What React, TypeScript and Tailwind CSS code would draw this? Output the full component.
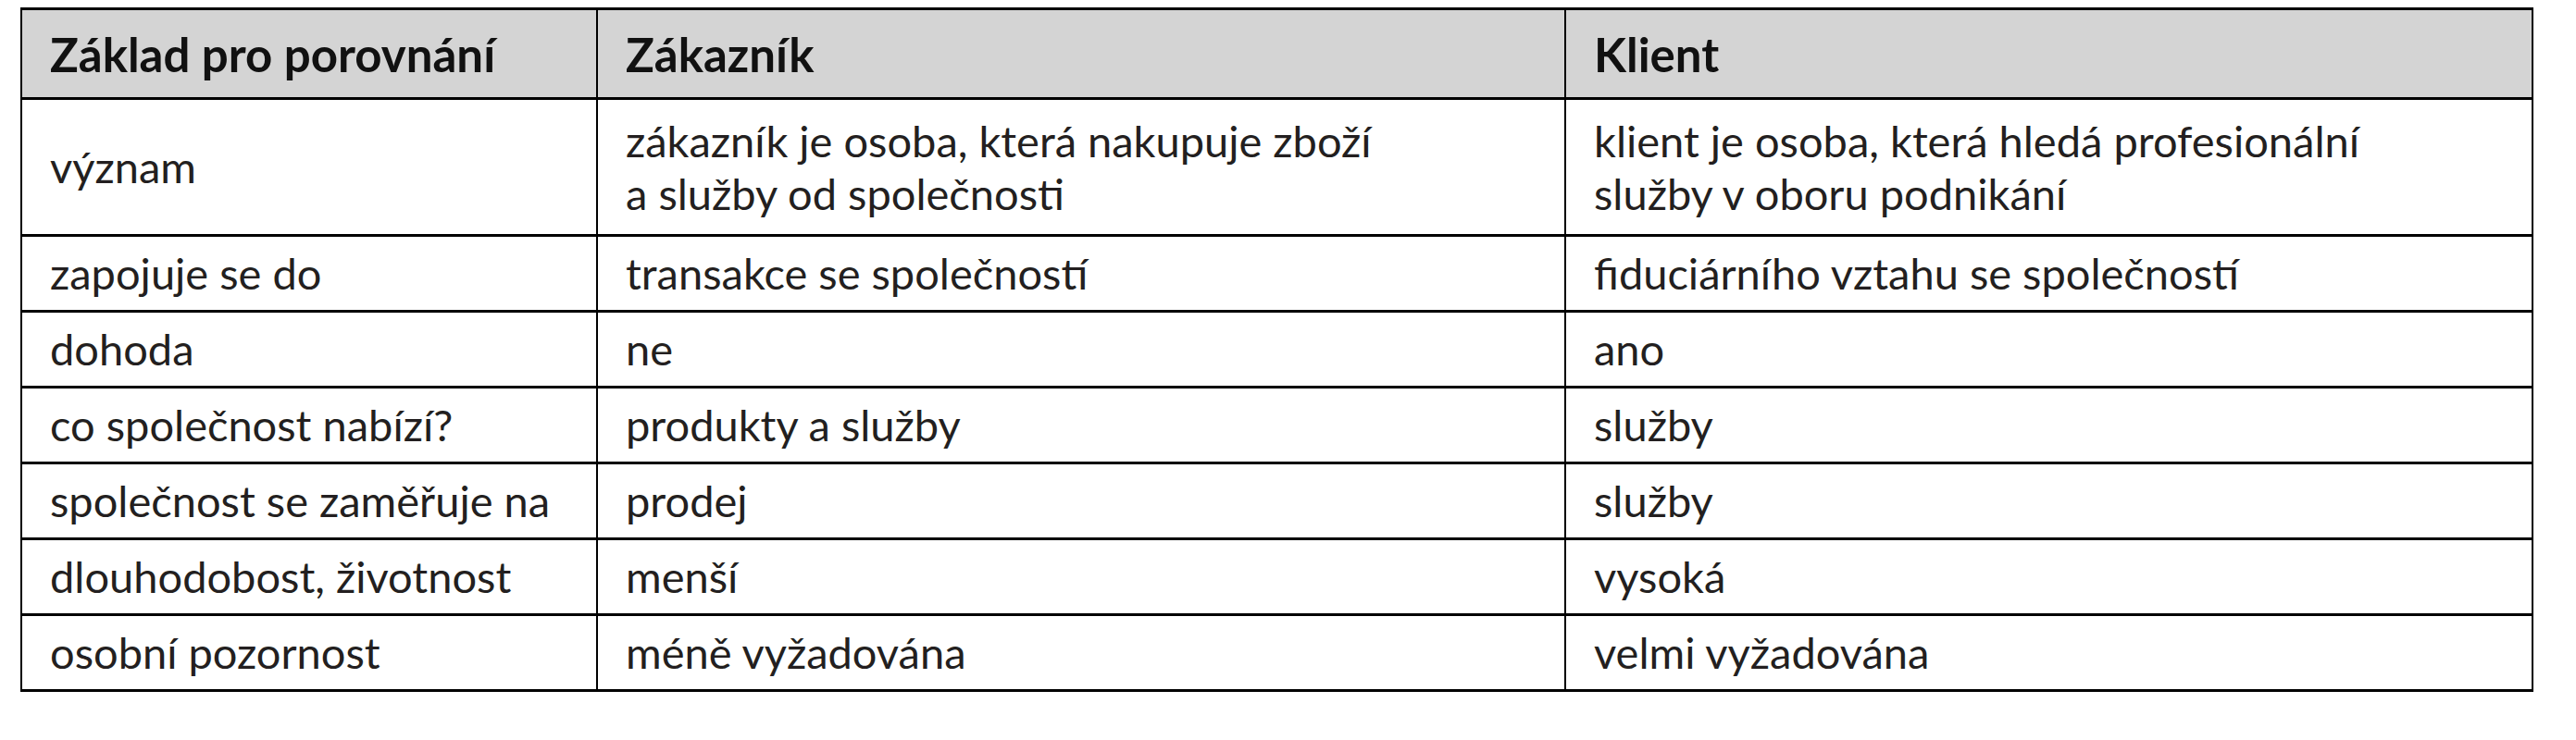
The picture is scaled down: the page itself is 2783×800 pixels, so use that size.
const rows: { basis: string; customer: string[]; client: string[] }[] = [
  {
    basis: "význam",
    customer: ["zákazník je osoba, která nakupuje zboží", "a služby od společnosti"],
    client: ["klient je osoba, která hledá profesionální", "služby v oboru podnikání"],
  },
  { basis: "zapojuje se do", customer: ["transakce se společností"], client: ["fiduciárního vztahu se společností"] },
  { basis: "dohoda", customer: ["ne"], client: ["ano"] },
  { basis: "co společnost nabízí?", customer: ["produkty a služby"], client: ["služby"] },
  { basis: "společnost se zaměřuje na", customer: ["prodej"], client: ["služby"] },
  { basis: "dlouhodobost, životnost", customer: ["menší"], client: ["vysoká"] },
  { basis: "osobní pozornost", customer: ["méně vyžadována"], client: ["velmi vyžadována"] },
];

export default function App() {
  return (
    <div className="min-h-[800px] w-[2783px] bg-white pl-[22px] pt-[8px] font-['Lato','Noto_Sans',sans-serif] text-[#231f20]">
      <table className="w-[2713px] table-fixed border-collapse border-2 border-black text-[47px] leading-[57px]">
        <colgroup>
          <col className="w-[622px]" />
          <col className="w-[1046px]" />
          <col className="w-[1045px]" />
        </colgroup>
        <thead>
          <tr className="h-[97px] bg-[#d4d4d4] text-left text-[51px]">
            <th className="border-x-2 border-y-[3px] border-black px-[30px] font-bold text-[#111]">Základ pro porovnání</th>
            <th className="border-x-2 border-y-[3px] border-black px-[30px] font-bold text-[#111]">Zákazník</th>
            <th className="border-x-2 border-y-[3px] border-black px-[30px] font-bold text-[#111]">Klient</th>
          </tr>
        </thead>
        <tbody>
          {rows.map((r, i) => (
            <tr key={r.basis} className={i === 0 ? "h-[148px]" : "h-[82px]"}>
              <td className="border-x-2 border-y-[3px] border-black px-[30px]">{r.basis}</td>
              <td className="border-x-2 border-y-[3px] border-black px-[30px]">
                {r.customer.map((l) => (
                  <div key={l}>{l}</div>
                ))}
              </td>
              <td className="border-x-2 border-y-[3px] border-black px-[30px]">
                {r.client.map((l) => (
                  <div key={l}>{l}</div>
                ))}
              </td>
            </tr>
          ))}
        </tbody>
      </table>
    </div>
  );
}
